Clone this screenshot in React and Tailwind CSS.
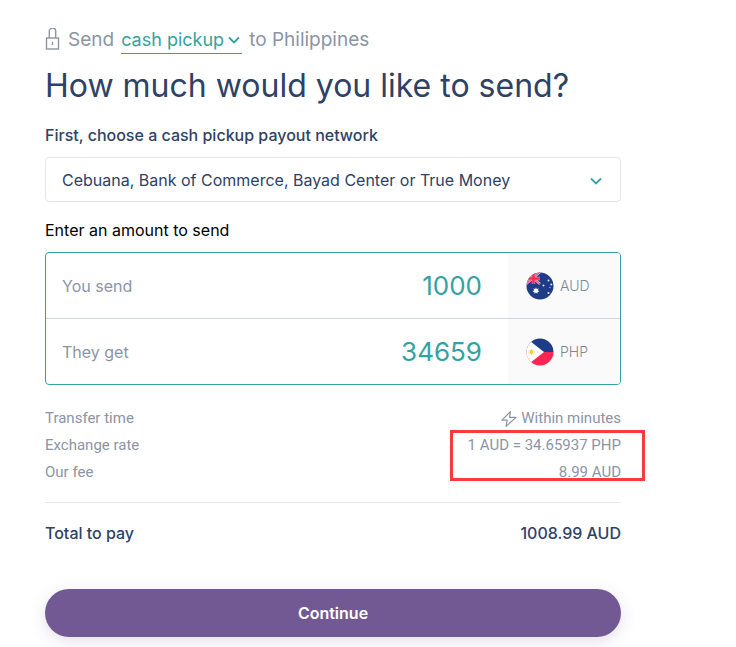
import { useState } from 'react';

const RATE = 34.65937;
const FEE = 8.99;

const LockIcon = () => (
  <svg className="h-6 w-4 shrink-0" viewBox="0 0 16 24" fill="none" stroke="#8b95a5" strokeWidth="1.4">
    <rect x="1.5" y="10" width="12" height="11" />
    <path d="M4.3 10V3.2a3.2 3.2 0 0 1 6.4 0V10" />
    <path d="M7.5 13.8v3.4" />
  </svg>
);

const ChevronIcon = ({ className }) => (
  <svg className={className} viewBox="0 0 12 12" fill="none" stroke="#35a29f" strokeWidth="1.8">
    <path d="M1 3.5l5 5 5-5" />
  </svg>
);

const BoltIcon = () => (
  <svg className="h-4 w-4" viewBox="0 0 16 16" fill="none" stroke="#8b95a5" strokeWidth="1.2" strokeLinejoin="round">
    <path d="M9.4 .7L1 9.2h5.2L5 15.4 15 6.4H8.6z" />
  </svg>
);

const AustraliaFlag = () => (
  <svg className="h-7 w-7 shrink-0" viewBox="0 0 28 28">
    <clipPath id="au">
      <circle cx="14" cy="14" r="13.5" />
    </clipPath>
    <g clipPath="url(#au)">
      <rect width="28" height="28" fill="#1f3c88" />
      <path d="M0 0l14 12M0 12L14 0" stroke="#e9a9bd" strokeWidth="2.4" />
      <path d="M0 0l14 12M0 12L14 0" stroke="#f0446a" strokeWidth="1" />
      <path d="M7.5 0v12M0 6.5h14" stroke="#f3a6ba" strokeWidth="3.4" />
      <path d="M7.5 0v12M0 6.5h14" stroke="#ff2b55" strokeWidth="2.6" />
      <path
        d="M10 15.4l.8 1.7 1.9-.5-.8 1.7 1.5 1.1-1.8.5v1.9L10 20.6l-1.6 1.2v-1.9l-1.8-.5 1.5-1.1-.8-1.7 1.9.5z"
        fill="#fff"
      />
      <g fill="#dfe6f5">
        <circle cx="22.5" cy="8.5" r="1" />
        <circle cx="17.5" cy="13.5" r="1" />
        <circle cx="25.3" cy="12.5" r="1" />
        <circle cx="24" cy="15.5" r=".6" />
        <circle cx="22.5" cy="21" r="1.1" />
      </g>
    </g>
  </svg>
);

const PhilippinesFlag = () => (
  <svg className="h-7 w-7 shrink-0" viewBox="0 0 28 28">
    <clipPath id="ph">
      <circle cx="14" cy="14" r="13.5" />
    </clipPath>
    <g clipPath="url(#ph)">
      <rect width="28" height="14" fill="#1f3c88" />
      <rect y="14" width="28" height="14" fill="#ff2553" />
      <path d="M0 0L4 3 18 14 4 25 0 28z" fill="#fff" />
      <path
        d="M5.5 10.8v6.4M2.3 14h6.4M3.3 11.8l4.4 4.4M3.3 16.2l4.4-4.4"
        stroke="#fbd56a"
        strokeWidth=".9"
      />
      <circle cx="5.5" cy="14" r="1.9" fill="#fcc93f" />
      <circle cx="12" cy="14" r=".8" fill="#fbe3a0" />
      <circle cx="3.5" cy="7.5" r=".7" fill="#fbe3a0" />
      <circle cx="3.5" cy="20.5" r=".7" fill="#fbe3a0" />
    </g>
  </svg>
);

const AmountRow = ({ id, label, value, onChange, flag, currency }) => (
  <div className="box-content flex h-[65px]">
    <label htmlFor={id} className="flex items-center pl-4 text-[#8b95a5]">
      {label}
    </label>
    <input
      id={id}
      inputMode="decimal"
      value={value}
      onChange={(e) => onChange(e.target.value)}
      className="min-w-0 flex-1 bg-transparent pr-[26px] text-right text-[26px] text-[#35a29f] outline-none"
    />
    <div className="flex w-28 items-center gap-1.5 bg-[#fafafa] pl-[18px] text-sm font-light text-[#7d8798]">
      {flag}
      {currency}
    </div>
  </div>
);

const App = () => {
  const [sendAmount, setSendAmount] = useState('1000');
  const [getAmount, setGetAmount] = useState('34659');

  const handleSend = (value) => {
    setSendAmount(value);
    setGetAmount(String(Math.floor((Number(value) || 0) * RATE)));
  };

  const handleGet = (value) => {
    setGetAmount(value);
    setSendAmount(((Number(value) || 0) / RATE).toFixed(2));
  };

  const total = ((Number(sendAmount) || 0) + FEE).toFixed(2);

  return (
    <main className="bg-white pt-6 pl-[45px] pr-4 pb-2.5 font-['Inter',sans-serif] text-base text-[#2e4265]">
      <div className="max-w-xl">
        {/* Delivery method */}
        <div className="flex h-8 items-center gap-[7px] text-[19px] text-[#8b95a5]">
          <LockIcon />
          <span>Send</span>
          <div className="relative h-7 border-b border-[#35a29f]">
            <select
              aria-label="Delivery method"
              className="h-full w-[121px] appearance-none bg-transparent text-lg text-[#35a29f] outline-none"
            >
              <option>cash pickup</option>
              <option>bank deposit</option>
            </select>
            <ChevronIcon className="pointer-events-none absolute top-2 right-0.5 h-3 w-3" />
          </div>
          <span>to Philippines</span>
        </div>

        <h1 className="mt-2 text-[32px] leading-[44px]">How much would you like to send?</h1>

        {/* Payout network */}
        <label htmlFor="network" className="mt-[15px] block leading-6 font-medium">
          First, choose a cash pickup payout network
        </label>
        <div className="relative mt-2.5">
          <select
            id="network"
            className="h-[45px] w-full appearance-none rounded border border-[#e4e5e7] bg-white px-4 outline-none"
          >
            <option>Cebuana, Bank of Commerce, Bayad Center or True Money</option>
          </select>
          <ChevronIcon className="pointer-events-none absolute top-[18px] right-[19px] h-3 w-3" />
        </div>

        {/* Amounts */}
        <p className="mt-4 leading-6 text-black">Enter an amount to send</p>
        <div className="mt-2.5 divide-y divide-[#cfd6db] overflow-hidden rounded border border-[#35a29f]">
          <AmountRow
            id="send"
            label="You send"
            value={sendAmount}
            onChange={handleSend}
            flag={<AustraliaFlag />}
            currency="AUD"
          />
          <AmountRow
            id="get"
            label="They get"
            value={getAmount}
            onChange={handleGet}
            flag={<PhilippinesFlag />}
            currency="PHP"
          />
        </div>

        {/* Summary */}
        <dl className="mt-5 border-b border-[#e7e8ea] pb-4 font-['Roboto',sans-serif] text-[15px] leading-[27px] text-[#8b95a5]">
          <div className="flex justify-between">
            <dt>Transfer time</dt>
            <dd className="flex items-center gap-1">
              <BoltIcon />
              Within minutes
            </dd>
          </div>
          <div className="relative">
            <div className="flex justify-between">
              <dt>Exchange rate</dt>
              <dd>1 AUD = {RATE} PHP</dd>
            </div>
            <div className="flex justify-between">
              <dt>Our fee</dt>
              <dd>{FEE} AUD</dd>
            </div>
            <div className="pointer-events-none absolute -top-0.5 -right-6 h-[51px] w-[195px] border-3 border-[#fb3a3e]" />
          </div>
        </dl>

        <div className="mt-[18px] flex justify-between leading-6 font-medium">
          <span>Total to pay</span>
          <span>{total} AUD</span>
        </div>

        <button
          type="button"
          className="mt-11 h-12 w-full rounded-full bg-[#735993] font-semibold text-white shadow-[0_4px_16px_rgba(115,89,147,0.2)]"
        >
          Continue
        </button>
      </div>
    </main>
  );
};

export default App;
